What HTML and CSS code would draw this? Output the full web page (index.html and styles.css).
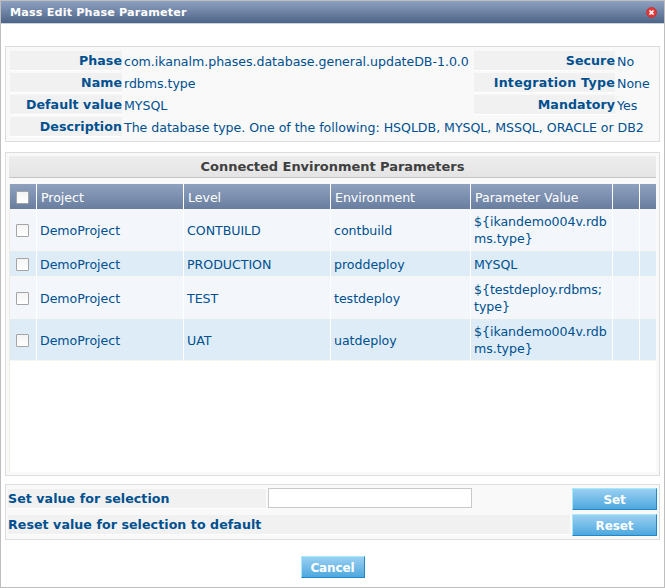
FILE: index.html
```html
<!DOCTYPE html>
<html lang="en">
<head>
<meta charset="utf-8">
<title>Mass Edit Phase Parameter</title>
<link rel="stylesheet" href="styles.css">
</head>
<body>
<div class="dialog">
  <header class="titlebar">
    <h1>Mass Edit Phase Parameter</h1>
    <svg class="close" viewBox="0 0 11 11" width="11" height="11"><circle cx="5.5" cy="5.5" r="5" fill="#e23b3b" stroke="#c52b35" stroke-width=".8"/><path d="M3.5 3.5l4 4M7.5 3.5l-4 4" stroke="#fff" stroke-width="1.7"/></svg>
  </header>
  <section class="panel details">
    <b class="label">Phase</b><span class="value phase">com.ikanalm.phases.database.general.updateDB-1.0.0</span><b class="label">Secure</b><span class="value">No</span>
    <b class="label">Name</b><span class="value">rdbms.type</span><b class="label integration">Integration Type</b><span class="value">None</span>
    <b class="label">Default value</b><span class="value">MYSQL</span><b class="label">Mandatory</b><span class="value">Yes</span>
    <b class="label">Description</b><span class="value wide">The database type. One of the following: HSQLDB, MYSQL, MSSQL, ORACLE or DB2</span>
  </section>
  <section class="panel environments">
    <h2>Connected Environment Parameters</h2>
    <div class="scroller">
      <table>
        <colgroup><col class="c-check"><col class="c-name"><col class="c-name"><col class="c-env"><col class="c-value"><col class="c-check"><col></colgroup>
        <thead><tr><th><input type="checkbox"></th><th>Project</th><th>Level</th><th>Environment</th><th>Parameter Value</th><th></th><th></th></tr></thead>
        <tbody>
          <tr class="tall"><td><input type="checkbox"></td><td>DemoProject</td><td>CONTBUILD</td><td>contbuild</td><td class="lines">${ikandemo004v.rdb<br>ms.type}</td><td></td><td></td></tr>
          <tr><td><input type="checkbox"></td><td>DemoProject</td><td>PRODUCTION</td><td>proddeploy</td><td>MYSQL</td><td></td><td></td></tr>
          <tr class="tall"><td><input type="checkbox"></td><td>DemoProject</td><td>TEST</td><td>testdeploy</td><td class="lines">${testdeploy.rdbms;<br>type}</td><td></td><td></td></tr>
          <tr class="tall"><td><input type="checkbox"></td><td>DemoProject</td><td>UAT</td><td>uatdeploy</td><td class="lines">${ikandemo004v.rdb<br>ms.type}</td><td></td><td></td></tr>
        </tbody>
      </table>
    </div>
  </section>
  <section class="panel actions">
    <div class="action"><b class="label set-label">Set value for selection</b><input class="field" type="text"><button>Set</button></div>
    <div class="action"><b class="label reset-label">Reset value for selection to default</b><button>Reset</button></div>
  </section>
  <footer><button class="cancel">Cancel</button></footer>
</div>
</body>
</html>
```
FILE: styles.css
```css
* { box-sizing: border-box; }
body {
  margin: 0;
  font: 12.6px/17px Verdana, "DejaVu Sans", sans-serif;
  letter-spacing: -.04px;
  color: #00508f;
  background: #fff;
}
.dialog { width: 665px; height: 588px; border: 1px solid #bebebe; }
.titlebar {
  display: flex;
  align-items: center;
  justify-content: space-between;
  height: 23px;
  padding: 1px 7px 0 9px;
  border-bottom: 1px solid #cbd2de;
  background: linear-gradient(#8fa1c1, #4d6487);
}
h1 { margin: 0; font-size: 11.2px; line-height: 20px; letter-spacing: .16px; color: #fff; }
.close { display: block; }
.panel { margin: 0 4px; border: 1px solid #ddd; background: #f9f9f9; }
.details {
  display: grid;
  grid-template-columns: 112px 348px 141px 1fr;
  grid-auto-rows: 20px;
  column-gap: 2px;
  row-gap: 2px;
  height: 96px;
  margin-top: 22px;
  padding: 4px 0 4px 4px;
}
.label {
  height: 20px;
  line-height: 20px;
  border-bottom: 1px solid #fff;
  background: #f1f1f1;
  letter-spacing: .07px;
  white-space: nowrap;
}
.details .label { text-align: right; }
.details .integration { letter-spacing: .26px; }
.value { line-height: 22px; white-space: nowrap; }
.wide { grid-column: 2 / 5; }
.environments { height: 324px; margin-top: 10px; padding: 3px; }
h2 {
  height: 22px;
  margin: 0 0 6px;
  border-bottom: 1px solid #c5c5c5;
  background: linear-gradient(#eee, #e4e4e4);
  color: #404040;
  font-size: 13px;
  line-height: 21px;
  text-align: center;
}
.scroller { height: 288px; border-left: 1px solid #eeede4; background: #fff; }
table { width: 646px; table-layout: fixed; border-collapse: separate; border-spacing: 0; }
.c-check { width: 27px; }
.c-name { width: 147px; }
.c-env { width: 140px; }
.c-value { width: 142px; }
th, td {
  height: 26px;
  padding: 2px 3px 0;
  border-right: 1px solid #fff;
  text-align: left;
  vertical-align: middle;
  white-space: nowrap;
}
th:last-child, td:last-child { border-right: 0; }
th { height: 25px; padding: 2px 4px 0; background: linear-gradient(#8fa1bf, #697e9f); color: #fff; font-weight: normal; }
td { border-bottom: 1px solid #f8f7ef; background: #f3f7fc; }
tr:nth-child(even) td { background: #deecf7; }
.tall td { height: 42px; }
.tall .lines { padding-top: 0; }
th:first-child, td:first-child { padding: 0 0 0 6px; }
input[type=checkbox] {
  appearance: none;
  display: block;
  width: 13px;
  height: 13px;
  margin: 1px 0 0;
  border: 1px solid #a4a4a4;
  border-radius: 1px;
  background: linear-gradient(#f4f4f4, #fff);
}
.actions { display: flex; flex-direction: column; gap: 4px; height: 56px; margin-top: 8px; padding: 3px 2px; }
.action { display: flex; height: 22px; }
.action .label { margin-top: 1px; }
.set-label { width: 258px; }
.reset-label { width: 562px; }
.field { width: 204px; height: 20px; margin: 0 0 0 2px; padding: 0; border: 1px solid #c8c8c8; background: #fff; }
button {
  width: 85px;
  height: 22px;
  margin: 0 0 0 auto;
  padding: 2px 0 0;
  border: 1px solid;
  border-color: #a6eafb #2287c8 #2287c8 #a6eafb;
  background: linear-gradient(#9ad0f2, #4ea8de);
  color: #fff;
  font: bold 12px/18px Verdana, "DejaVu Sans", sans-serif;
  letter-spacing: -.1px;
}
footer { display: flex; justify-content: center; margin-top: 16px; }
.cancel { width: 64px; margin: 0; }
```
